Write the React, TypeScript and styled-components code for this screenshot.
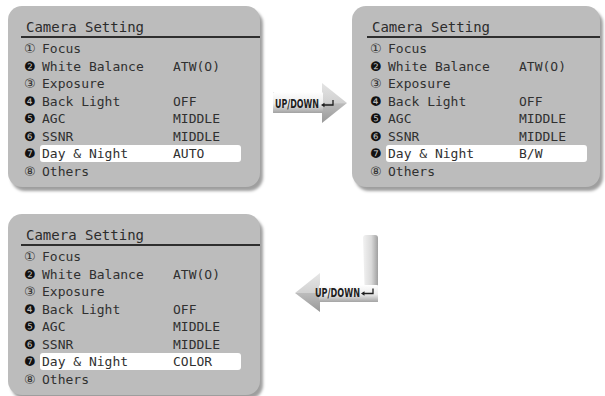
import styled, { createGlobalStyle } from 'styled-components';

const GlobalStyle = createGlobalStyle`
  body {
    margin: 0;
    background: #ffffff;
    font-family: "DejaVu Sans Mono", monospace;
  }
`

const Page = styled.div`
  display: flex;
  flex-direction: column;
  padding: 6px 0 0 8px;
  width: 605px;
  height: 396px;
  box-sizing: border-box;
  overflow: hidden;
`

const TopRow = styled.div`
  display: flex;
  flex-direction: row;
  align-items: flex-start;
`

const BottomRow = styled.div`
  display: flex;
  flex-direction: row;
  align-items: flex-start;
  margin-top: 27px;
`

const ArrowCell = styled.div`
  width: 92px;
  height: 181px;
  display: flex;
  align-items: flex-start;
`

const Panel = styled.div<{ $width: number; $inset: number }>`
  width: ${p => p.$width}px;
  height: 181px;
  flex-shrink: 0;
  background: #bcbcbc;
  border-radius: 14px;
  box-shadow: 3px 4px 3px rgba(0, 0, 0, 0.38);
  padding-left: ${p => p.$inset}px;
  box-sizing: border-box;
`

const Header = styled.div`
  margin-left: 13px;
  padding: 13px 0 0 5px;
  height: 17px;
  border-bottom: 2px solid #2e2e2e;
  font-size: 14px;
  line-height: 17px;
  color: #2c2c2c;
`

const List = styled.div`
  display: flex;
  flex-direction: column;
  padding-top: 2px;
`

const Row = styled.div`
  display: flex;
  flex-direction: row;
  align-items: center;
  height: 17.5px;
  padding-left: 16px;
`

const Badge = styled.span<{ $filled: boolean }>`
  width: 16px;
  font-family: "DejaVu Sans", sans-serif;
  font-size: ${p => (p.$filled ? 13 : 13)}px;
  line-height: 17px;
  color: ${p => (p.$filled ? '#111111' : '#333333')};
`

const Field = styled.div<{ $active: boolean }>`
  display: flex;
  flex-direction: row;
  align-items: center;
  width: 201px;
  height: 17px;
  padding-left: 2px;
  box-sizing: border-box;
  border-radius: 3px;
  background: ${p => (p.$active ? '#ffffff' : 'transparent')};
  font-size: 13px;
  line-height: 17px;
  color: #303030;
  white-space: pre;
`

const Label = styled.span`
  width: 131px;
`

const Value = styled.span``

const ArrowSvg = styled.svg<{ $top: number; $left: number }>`
  display: block;
  margin-top: ${p => p.$top}px;
  margin-left: ${p => p.$left}px;
  overflow: visible;
`

const ArrowText = styled.text`
  font-family: "DejaVu Sans Condensed", "DejaVu Sans", sans-serif;
  font-weight: bold;
  font-size: 11.5px;
  fill: #1e1e1e;
`

type Item = { badge: string; filled: boolean; label: string; value: string }

const items: Item[] = [
  { badge: '①', filled: false, label: 'Focus', value: '' },
  { badge: '❷', filled: true, label: 'White Balance', value: 'ATW(O)' },
  { badge: '③', filled: false, label: 'Exposure', value: '' },
  { badge: '❹', filled: true, label: 'Back Light', value: 'OFF' },
  { badge: '❺', filled: true, label: 'AGC', value: 'MIDDLE' },
  { badge: '❻', filled: true, label: 'SSNR', value: 'MIDDLE' },
  { badge: '❼', filled: true, label: 'Day & Night', value: '' },
  { badge: '⑧', filled: false, label: 'Others', value: '' },
]

type SettingPanelProps = {
  mode: string,
  width: number,
  inset: number,
}

function SettingPanel({ mode, width, inset }: SettingPanelProps) {
  return (
    <Panel $width={width} $inset={inset}>
      <Header>Camera Setting</Header>
      <List>
        {items.map((it, i) => (
          <Row key={i}>
            <Badge $filled={it.filled}>{it.badge}</Badge>
            <Field $active={i === 6}>
              <Label>{it.label}</Label>
              <Value>{i === 6 ? mode : it.value}</Value>
            </Field>
          </Row>
        ))}
      </List>
    </Panel>
  )
}

function ReturnMark({ x, y }: { x: number; y: number }) {
  return (
    <g transform={`translate(${x} ${y})`} stroke="#1e1e1e" strokeWidth="1.3" fill="none">
      <path d="M2 5 H12 V0" />
      <path d="M0 5 L3.5 2.8 V7.2 Z" fill="#1e1e1e" stroke="none" />
    </g>
  )
}

function RightArrow() {
  return (
    <ArrowSvg width="92" height="46" viewBox="0 0 92 46" $top={75} $left={0}>
      <defs>
        <linearGradient id="rBody" x1="0" y1="0" x2="0" y2="1">
          <stop offset="0" stopColor="#ffffff" />
          <stop offset="0.55" stopColor="#ececec" />
          <stop offset="1" stopColor="#a2a2a2" />
        </linearGradient>
        <linearGradient id="rHead" x1="0" y1="0" x2="0" y2="1">
          <stop offset="0" stopColor="#e4e4e4" />
          <stop offset="0.5" stopColor="#d0d0d0" />
          <stop offset="0.52" stopColor="#bababa" />
          <stop offset="1" stopColor="#999999" />
        </linearGradient>
      </defs>
      <path d="M13 11 H62 V2 L87 22 L62 42 V32 H13 Z" fill="url(#rHead)" />
      <rect x="13" y="11" width="50" height="21" rx="1.5" fill="url(#rBody)" />
      <ArrowText x="15" y="26.5" textLength="44" lengthAdjust="spacingAndGlyphs">UP/DOWN</ArrowText>
      <ReturnMark x={61} y={19} />
    </ArrowSvg>
  )
}

function CornerArrow() {
  return (
    <ArrowSvg width="95" height="88" viewBox="0 0 95 88" $top={16} $left={30}>
      <defs>
        <linearGradient id="lBar" x1="0" y1="0" x2="1" y2="0">
          <stop offset="0" stopColor="#f2f2f2" />
          <stop offset="0.55" stopColor="#dadada" />
          <stop offset="1" stopColor="#a0a0a0" />
        </linearGradient>
        <linearGradient id="lBody" x1="0" y1="0" x2="0" y2="1">
          <stop offset="0" stopColor="#ffffff" />
          <stop offset="0.55" stopColor="#eaeaea" />
          <stop offset="1" stopColor="#a4a4a4" />
        </linearGradient>
        <linearGradient id="lHead" x1="0" y1="0" x2="0" y2="1">
          <stop offset="0" stopColor="#e6e6e6" />
          <stop offset="0.5" stopColor="#d2d2d2" />
          <stop offset="0.52" stopColor="#bcbcbc" />
          <stop offset="1" stopColor="#989898" />
        </linearGradient>
      </defs>
      <path d="M73 8 Q73 5 76 5 H85 Q88 5 88 8 V70 Q88 72 86 72 H75 Z" fill="url(#lBar)" />
      <path d="M5 63 L30 43 V55 H88 V72 H30 V82 Z" fill="url(#lHead)" />
      <rect x="29" y="55" width="59" height="17" rx="1.5" fill="url(#lBody)" />
      <ArrowText x="25" y="66.5" textLength="45" lengthAdjust="spacingAndGlyphs">UP/DOWN</ArrowText>
      <ReturnMark x={71} y={58.5} />
    </ArrowSvg>
  )
}

export default function App() {
  return (
    <Page>
      <GlobalStyle />
      <TopRow>
        <SettingPanel mode="AUTO" width={252} inset={0} />
        <ArrowCell>
          <RightArrow />
        </ArrowCell>
        <SettingPanel mode="B/W" width={248} inset={2} />
      </TopRow>
      <BottomRow>
        <SettingPanel mode="COLOR" width={252} inset={0} />
        <CornerArrow />
      </BottomRow>
    </Page>
  )
}
